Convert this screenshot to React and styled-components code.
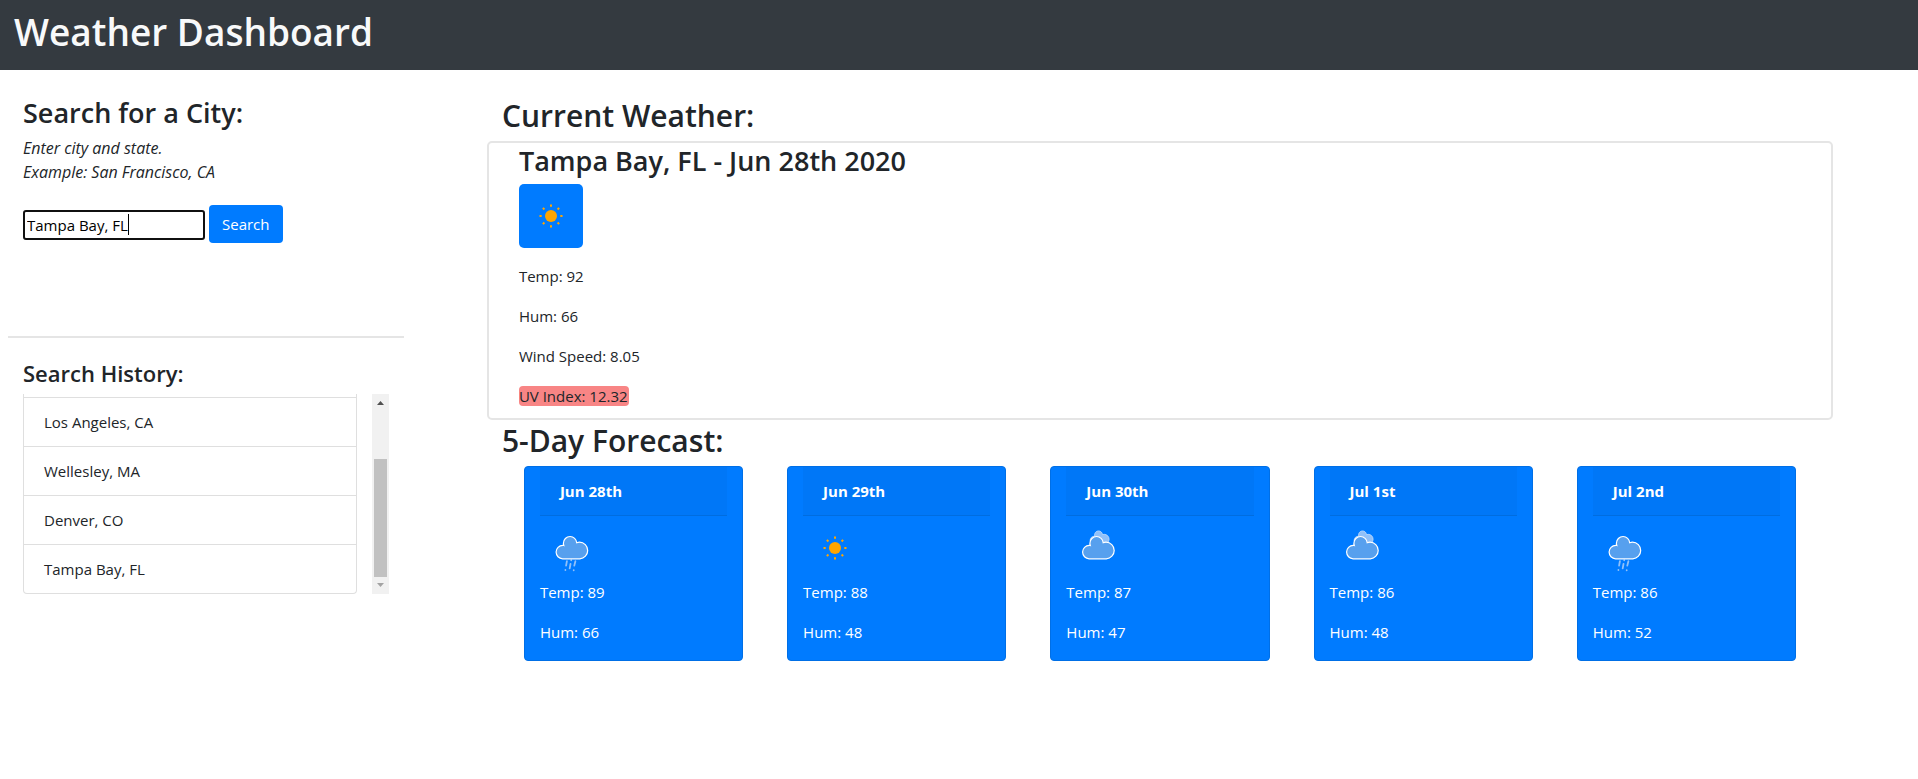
import React, { useState } from "react";
import styled, { createGlobalStyle } from "styled-components";

const GlobalStyle = createGlobalStyle`
  *, *::before, *::after { box-sizing: border-box; }
  body {
    margin: 0;
    background: #fff;
    color: #212529;
    font-family: "Segoe UI", "Open Sans", "Noto Sans", sans-serif;
    font-size: 15px;
    line-height: 24px;
  }
`;

const Header = styled.header`
  background: #343a40;
  padding: 8px 14px 14px;
`;

const Brand = styled.h1`
  margin: 0;
  color: #f8f9fa;
  font-size: 37px;
  font-weight: 600;
  line-height: 48px;
`;

const Page = styled.main`
  display: grid;
  grid-template-columns: minmax(0, 5fr) minmax(0, 17fr);
  column-gap: 83px;
  padding: 26px 85px 26px 8px;
`;

const SearchPanel = styled.section`
  height: 240px;
  padding: 0 15px;
`;

const HistoryPanel = styled.section`
  border-top: 2px solid #e5e5e5;
  padding: 21px 15px 0;
`;

const headingSizes = {
  large: "30px/38px",
  medium: "27px/34px",
  small: "22px/28px",
};

const Heading = styled.h2`
  margin: 0;
  font: 600 ${(p) => headingSizes[p.$size]} "Segoe UI", "Open Sans", "Noto Sans", sans-serif;
`;

const Hint = styled.p`
  margin: 6px 0 21px;
  font-size: 16px;
  font-style: italic;
`;

const SearchForm = styled.form`
  display: flex;
  align-items: center;
  gap: 4px;
`;

const InputWrap = styled.div`
  position: relative;
  display: flex;
  padding-top: 2px;
`;

const CityInput = styled.input`
  width: 182px;
  height: 30px;
  padding: 1px 2px;
  border: 2px solid #101010;
  border-radius: 3px;
  outline: none;
  color: #000;
  font: inherit;
  caret-color: transparent;
`;

const Caret = styled.span`
  position: absolute;
  top: 6px;
  left: 105px;
  width: 1px;
  height: 21px;
  background: #000;
  pointer-events: none;
`;

const SearchButton = styled.button`
  height: 38px;
  padding: 0 13px;
  border: 0;
  border-radius: 4px;
  background: #007bff;
  color: #fff;
  font: inherit;
  cursor: pointer;
`;

const HistoryScroller = styled.div`
  display: flex;
  gap: 15px;
  height: 200px;
  margin-top: 7px;
`;

const HistoryList = styled.ul`
  flex: 1;
  margin: 0;
  padding: 3px 0 0;
  list-style: none;
  border: 1px solid #dfdfdf;
  border-top: 0;
  border-radius: 0 0 4px 4px;
`;

const HistoryItem = styled.li`
  height: 49px;
  padding: 12px 20px;
  border-top: 1px solid #dfdfdf;
`;

const ScrollBar = styled.div`
  display: flex;
  flex-direction: column;
  align-items: center;
  width: 17px;
  background: #f1f1f1;
`;

const ScrollArrow = styled.svg`
  display: block;
  width: 17px;
  height: 17px;
  fill: ${(p) => (p.$disabled ? "#a3a3a3" : "#505050")};
`;

const ScrollThumb = styled.div`
  width: 13px;
  height: 118px;
  margin-top: auto;
  background: #c1c1c1;
`;

const Section = styled.section`
  min-width: 0;
`;

const SectionTitle = styled(Heading)`
  padding: 1px 15px 0;
`;

const CurrentCard = styled.article`
  margin: 6px 0 1px;
  padding: 1px 30px 10px;
  border: 2px solid #e5e5e5;
  border-radius: 5px;
`;

const IconTile = styled.div`
  width: 64px;
  height: 64px;
  margin: 6px 0 16px;
  border-radius: 5px;
  background: #007bff;
`;

const Reading = styled.p`
  margin: 0 0 16px;
  &:last-child { margin-bottom: 0; }
`;

const UvBadge = styled.span`
  padding-right: 1px;
  border-radius: 4px;
  background: #f88585;
`;

const Forecast = styled.div`
  display: grid;
  grid-template-columns: repeat(5, minmax(0, 1fr));
  gap: 44px;
  margin-top: 6px;
  padding: 0 37px;
`;

const DayCard = styled.article`
  padding: 0 15px 16px;
  border: 1px solid #006fe6;
  border-radius: 4px;
  background: #007bff;
  color: #fff;
`;

const DayHeader = styled.h3`
  margin: 0;
  padding: 12px 20px;
  border-bottom: 1px solid #006de0;
  background: #0077f7;
  font-size: 15px;
  font-weight: 700;
  line-height: 24px;
`;

const Icon = styled.svg`
  display: block;
  width: 64px;
  height: 64px;
`;

const CLOUD =
  "M47.7,35.4c0-4.6-3.7-8.2-8.2-8.2c-1,0-1.9,0.2-2.8,0.5c-0.3-3.4-3.1-6.2-6.6-6.2c-3.7,0-6.7,3-6.7,6.7c0,0.8,0.2,1.6,0.4,2.3c-0.3-0.1-0.7-0.1-1-0.1c-3.7,0-6.7,3-6.7,6.7c0,3.6,2.9,6.6,6.5,6.7l17.2,0C44.2,43.3,47.7,39.8,47.7,35.4z";

function SunIcon() {
  return (
    <Icon viewBox="0 0 64 64" role="img" aria-label="Sunny">
      <g transform="translate(32 32)">
        <circle r="6" fill="orange" />
        {[0, 45, 90, 135, 180, 225, 270, 315].map((a) => (
          <line key={a} y1="9.3" y2="11.5" stroke="orange" strokeWidth="2" transform={`rotate(${a})`} />
        ))}
      </g>
    </Icon>
  );
}

function CloudyIcon() {
  return (
    <Icon viewBox="0 0 64 64" role="img" aria-label="Cloudy">
      <path d={CLOUD} fill="#91C0F8" stroke="#C9E0FC" strokeWidth="1.2" transform="translate(14.5 2) scale(0.6)" />
      <path d={CLOUD} fill="#57A0EE" stroke="#fff" strokeWidth="1.2" transform="translate(0.5 -1)" />
    </Icon>
  );
}

function RainIcon() {
  return (
    <Icon viewBox="0 0 64 64" role="img" aria-label="Rain">
      <path
        d="M26.9 45.2l-.8 4.4M25.4 54v.1M31.2 44.2v.1M30.5 48l-.8 4.4M35.4 45.2l-1.1 4.4M33.7 54.2v.1"
        fill="none"
        stroke="#91C0F8"
        strokeWidth="1.8"
        strokeLinecap="round"
      />
      <path d={CLOUD} fill="#57A0EE" stroke="#fff" strokeWidth="1.2" transform="translate(0 -1)" />
    </Icon>
  );
}

const icons = { sun: SunIcon, cloudy: CloudyIcon, rain: RainIcon };

const days = [
  { date: "Jun 28th", icon: "rain", temp: 89, hum: 66 },
  { date: "Jun 29th", icon: "sun", temp: 88, hum: 48 },
  { date: "Jun 30th", icon: "cloudy", temp: 87, hum: 47 },
  { date: "Jul 1st", icon: "cloudy", temp: 86, hum: 48 },
  { date: "Jul 2nd", icon: "rain", temp: 86, hum: 52 },
];

const history = ["Los Angeles, CA", "Wellesley, MA", "Denver, CO", "Tampa Bay, FL"];

export default function App() {
  const [city, setCity] = useState("Tampa Bay, FL");

  return (
    <>
      <GlobalStyle />
      <Header>
        <Brand>Weather Dashboard</Brand>
      </Header>
      <Page>
        <aside>
          <SearchPanel>
            <Heading as="h3" $size="medium">Search for a City:</Heading>
            <Hint id="city-hint">
              Enter city and state.
              <br />
              Example: San Francisco, CA
            </Hint>
            <SearchForm onSubmit={(e) => e.preventDefault()}>
              <InputWrap>
                <CityInput
                  type="text"
                  aria-label="City and state"
                  aria-describedby="city-hint"
                  autoFocus
                  value={city}
                  onChange={(e) => setCity(e.target.value)}
                />
                <Caret />
              </InputWrap>
              <SearchButton type="submit">Search</SearchButton>
            </SearchForm>
          </SearchPanel>
          <HistoryPanel>
            <Heading as="h4" $size="small">Search History:</Heading>
            <HistoryScroller>
              <HistoryList>
                {history.map((name) => (
                  <HistoryItem key={name}>{name}</HistoryItem>
                ))}
              </HistoryList>
              <ScrollBar aria-hidden="true">
                <ScrollArrow viewBox="0 0 17 17">
                  <path d="M5 11L8.5 7L12 11z" />
                </ScrollArrow>
                <ScrollThumb />
                <ScrollArrow viewBox="0 0 17 17" $disabled>
                  <path d="M5 6L8.5 10L12 6z" />
                </ScrollArrow>
              </ScrollBar>
            </HistoryScroller>
          </HistoryPanel>
        </aside>
        <Section>
          <SectionTitle $size="large">Current Weather:</SectionTitle>
          <CurrentCard>
            <Heading as="h3" $size="medium">Tampa Bay, FL - Jun 28th 2020</Heading>
            <IconTile>
              <SunIcon />
            </IconTile>
            <Reading>Temp: 92</Reading>
            <Reading>Hum: 66</Reading>
            <Reading>Wind Speed: 8.05</Reading>
            <Reading>
              <UvBadge>UV Index: 12.32</UvBadge>
            </Reading>
          </CurrentCard>
          <SectionTitle $size="large">5-Day Forecast:</SectionTitle>
          <Forecast>
            {days.map((day) => {
              const DayIcon = icons[day.icon];
              return (
                <DayCard key={day.date}>
                  <DayHeader>{day.date}</DayHeader>
                  <DayIcon />
                  <Reading>Temp: {day.temp}</Reading>
                  <Reading>Hum: {day.hum}</Reading>
                </DayCard>
              );
            })}
          </Forecast>
        </Section>
      </Page>
    </>
  );
}
